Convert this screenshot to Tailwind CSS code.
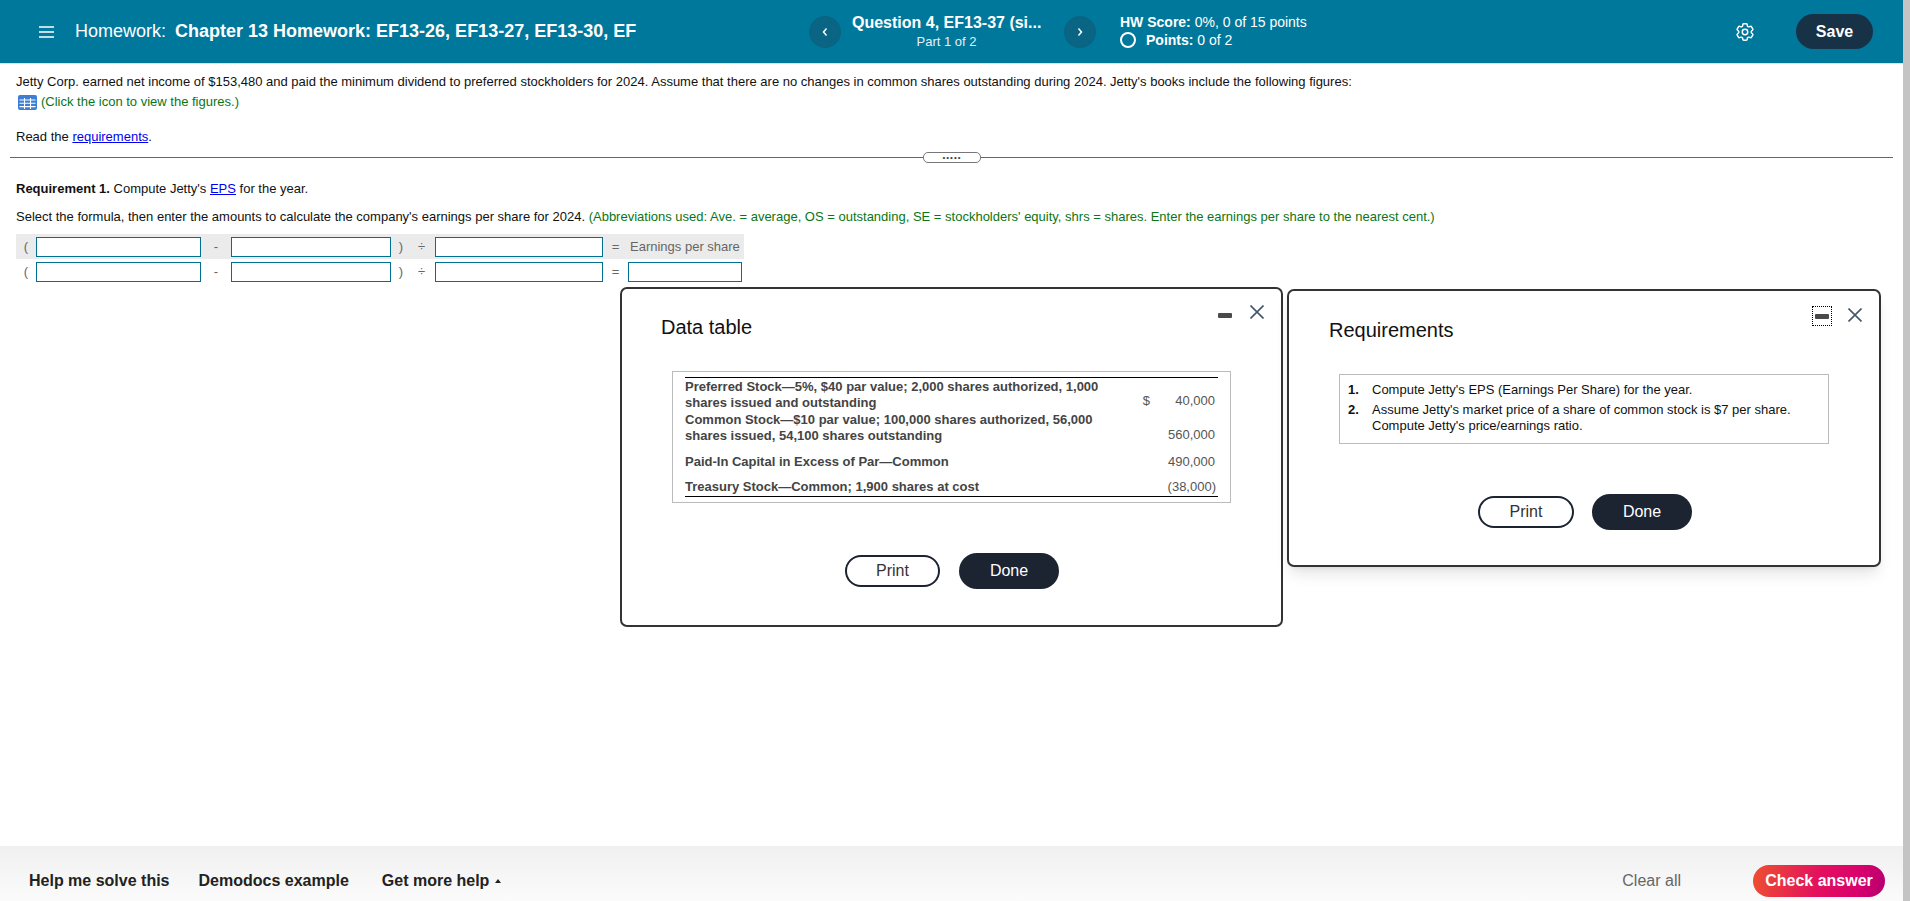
<!DOCTYPE html>
<html lang="en">
<head>
  <meta charset="UTF-8">
  <title>Homework: Chapter 13 Homework</title>
  <script src="https://cdn.jsdelivr.net/npm/@tailwindcss/browser@4"></script>
</head>
<body class="bg-white font-['Liberation_Sans',Arial,sans-serif] overflow-hidden">
<div class="flex h-[901px] w-[1910px]">
  <div class="relative flex flex-col w-[1903px] h-full">

    <!-- Header -->
    <header class="flex items-center h-[64px] shrink-0 bg-[#00789c] border-b border-[#cfe4ec] text-white pl-[39px] pr-[30px]">
      <svg class="w-[15px] h-[12px] shrink-0" viewBox="0 0 15 12" fill="none" stroke="currentColor" stroke-width="1.4"><path d="M0 1h15M0 6h15M0 11h15"/></svg>
      <div class="ml-[21px] w-[734px] shrink-0 text-[18px] whitespace-nowrap">Homework:<span class="ml-[9px] font-bold">Chapter 13 Homework: EF13-26, EF13-27, EF13-30, EF</span></div>
      <button class="flex items-center justify-center w-[32px] h-[32px] rounded-full bg-[#0a6483] shrink-0">
        <svg class="w-[8px] h-[10px]" viewBox="0 0 8 10" fill="none" stroke="currentColor" stroke-width="1.5"><path d="M5.5 1.5 2.5 5l3 3.5"/></svg>
      </button>
      <div class="w-[223px] shrink-0 pl-[11px] pr-[23px] text-center">
        <div class="text-[16px] font-bold whitespace-nowrap leading-[20px]">Question 4, EF13-37 (si...</div>
        <div class="text-[13px] leading-[16px] mt-[1px] text-[#e3f1f6]">Part 1 of 2</div>
      </div>
      <button class="flex items-center justify-center w-[32px] h-[32px] rounded-full bg-[#0a6483] shrink-0">
        <svg class="w-[8px] h-[10px]" viewBox="0 0 8 10" fill="none" stroke="currentColor" stroke-width="1.5"><path d="M2.5 1.5 5.5 5l-3 3.5"/></svg>
      </button>
      <div class="ml-[24px] -mt-[1px] text-[14px] leading-[18px]">
        <div><span class="font-bold">HW Score:</span> 0%, 0 of 15 points</div>
        <div class="flex items-center">
          <span class="w-[16px] h-[16px] rounded-full border-2 border-white mr-[10px]"></span>
          <span><span class="font-bold">Points:</span> 0 of 2</span>
        </div>
      </div>
      <svg class="ml-auto w-[22px] h-[22px]" viewBox="0 0 24 24" fill="none" stroke="currentColor" stroke-width="1.6" stroke-linejoin="round"><path d="M9.594 3.94c.09-.542.56-.94 1.11-.94h2.593c.55 0 1.02.398 1.11.94l.213 1.281c.063.374.313.686.645.87.074.04.147.083.22.127.325.196.72.257 1.075.124l1.217-.456a1.125 1.125 0 0 1 1.37.49l1.296 2.247a1.125 1.125 0 0 1-.26 1.431l-1.003.827c-.293.241-.438.613-.43.992a7.723 7.723 0 0 1 0 .255c-.008.378.137.75.43.991l1.004.827c.424.35.534.955.26 1.43l-1.298 2.247a1.125 1.125 0 0 1-1.369.491l-1.217-.456c-.355-.133-.75-.072-1.076.124a6.47 6.47 0 0 1-.22.128c-.331.183-.581.495-.644.869l-.213 1.281c-.09.543-.56.94-1.11.94h-2.594c-.55 0-1.019-.398-1.11-.94l-.213-1.281c-.062-.374-.312-.686-.644-.87a6.52 6.52 0 0 1-.22-.127c-.325-.196-.72-.257-1.076-.124l-1.217.456a1.125 1.125 0 0 1-1.369-.49l-1.297-2.247a1.125 1.125 0 0 1 .26-1.431l1.004-.827c.292-.24.437-.613.43-.991a6.932 6.932 0 0 1 0-.255c.007-.38-.138-.751-.43-.992l-1.004-.827a1.125 1.125 0 0 1-.26-1.43l1.297-2.247a1.125 1.125 0 0 1 1.37-.491l1.216.456c.356.133.751.072 1.076-.124.072-.044.146-.086.22-.128.332-.183.582-.495.644-.869l.214-1.28Z"/><circle cx="12" cy="12" r="3"/></svg>
      <button class="ml-[40px] w-[77px] h-[35px] rounded-full bg-[#173247] text-[16px] font-bold">Save</button>
    </header>

    <!-- Question -->
    <main class="flex-1 pt-[8px] text-[13px] leading-[20px] text-[#111]">
      <p class="px-[16px]">Jetty Corp. earned net income of $153,480 and paid the minimum dividend to preferred stockholders for 2024. Assume that there are no changes in common shares outstanding during 2024. Jetty's books include the following figures:</p>
      <p class="flex items-center px-[18px] text-[#0a7518]">
        <svg class="w-[19px] h-[15px] mr-[4px]" viewBox="0 0 19 15"><rect width="19" height="15" rx="2" fill="#3a7fd5"/><path d="M1.5 5h16M1.5 8.300h16M1.5 11.600h16M6.500 3v11M12.500 3v11" stroke="#fff" stroke-width="1.100"/></svg>
        (Click the icon to view the figures.)
      </p>
      <p class="px-[16px] mt-[15px]">Read the <a href="#" class="text-[#0000ee] underline">requirements</a>.</p>

      <div class="relative mx-[10px] mt-[10px] border-t border-[#666]">
        <div class="absolute left-[913px] top-[-6px] flex items-center justify-center w-[58px] h-[11px] bg-white border border-[#777] rounded-[5px] text-[8px] leading-[6px] tracking-[1px] text-[#444]">•••••</div>
      </div>

      <p class="px-[16px] mt-[21px]"><span class="font-bold">Requirement 1.</span> Compute Jetty's <a href="#" class="text-[#0000ee] underline">EPS</a> for the year.</p>
      <p class="px-[16px] mt-[8px]">Select the formula, then enter the amounts to calculate the company's earnings per share for 2024. <span class="text-[#0a7518]">(Abbreviations used: Ave. = average, OS = outstanding, SE = stockholders' equity, shrs = shares. Enter the earnings per share to the nearest cent.)</span></p>

      <!-- Formula -->
      <div class="ml-[16px] mt-[7px] w-[728px] text-[#666]">
        <div class="flex items-center h-[25px] bg-[#ebebeb]">
          <span class="w-[20px] text-center">(</span>
          <input class="w-[165px] h-[20px] bg-white border border-[#006f90]">
          <span class="w-[30px] text-center">-</span>
          <input class="w-[160px] h-[20px] bg-white border border-[#006f90]">
          <span class="w-[20px] text-center">)</span>
          <span class="w-[24px] pr-[3px] text-center">÷</span>
          <input class="w-[168px] h-[20px] bg-white border border-[#006f90]">
          <span class="w-[25px] text-center">=</span>
          <span class="pl-[2px] whitespace-nowrap">Earnings per share</span>
        </div>
        <div class="flex items-center h-[26px]">
          <span class="w-[20px] text-center">(</span>
          <input class="w-[165px] h-[20px] bg-white border border-[#006f90]">
          <span class="w-[30px] text-center">-</span>
          <input class="w-[160px] h-[20px] bg-white border border-[#006f90]">
          <span class="w-[20px] text-center">)</span>
          <span class="w-[24px] pr-[3px] text-center">÷</span>
          <input class="w-[168px] h-[20px] bg-white border border-[#006f90]">
          <span class="w-[25px] text-center">=</span>
          <input class="w-[114px] h-[20px] bg-white border border-[#006f90]">
        </div>
      </div>
    </main>

    <!-- Footer -->
    <footer class="flex items-center h-[55px] shrink-0 pt-[14px] pl-[29px] pr-[18px] bg-gradient-to-b from-[#f0f0f0] to-[#fbfbfb] text-[16px]">
      <span class="font-bold text-[#222]">Help me solve this</span>
      <span class="ml-[29px] font-bold text-[#222]">Demodocs example</span>
      <span class="ml-[33px] font-bold text-[#222]">Get more help</span>
      <span class="ml-[6px] w-0 h-0 border-x-[3.5px] border-x-transparent border-b-[4px] border-b-[#222]"></span>
      <span class="ml-auto text-[#666]">Clear all</span>
      <button class="ml-[72px] w-[132px] h-[32px] rounded-full bg-[linear-gradient(100deg,#ee5030,#e3105e_50%,#d8006e_80%,#b3006f)] text-white font-bold">Check answer</button>
    </footer>

    <!-- Data table window -->
    <section class="absolute left-[620px] top-[287px] w-[663px] h-[340px] bg-white border-2 border-[#333] rounded-[7px]">
      <div class="absolute left-[596px] top-[24px] w-[14px] h-[5px] bg-[#4a4a4a] rounded-[1px]"></div>
      <svg class="absolute left-[628px] top-[16px] w-[14px] h-[14px]" viewBox="0 0 14 14" fill="none" stroke="#46566a" stroke-width="1.600"><path d="M.5.5l13 13M13.500.5l-13 13"/></svg>
      <h2 class="ml-[39px] mt-[25px] text-[20px] leading-[26px] text-[#111]">Data table</h2>
      <div class="ml-[50px] mt-[31px] w-[559px] h-[132px] border border-[#bbb] px-[12px] pt-[5px]">
        <table class="table-fixed w-[533px] border-y border-black text-[13px] leading-[16px] text-[#444]">
          <tbody>
            <tr class="h-[33px]">
              <td class="w-[430px] pt-[1px] font-bold">Preferred Stock—5%, $40 par value; 2,000 shares authorized, 1,000 shares issued and outstanding</td>
              <td class="w-[35px] align-bottom pb-[2px] text-right text-[#555]">$</td>
              <td class="w-[68px] align-bottom pb-[2px] pr-[3px] text-right text-[#555]">40,000</td>
            </tr>
            <tr class="h-[34px]">
              <td class="font-bold">Common Stock—$10 par value; 100,000 shares authorized, 56,000 shares issued, 54,100 shares outstanding</td>
              <td></td>
              <td class="align-bottom pb-[2px] pr-[3px] text-right text-[#555]">560,000</td>
            </tr>
            <tr class="h-[31px]">
              <td class="pt-[2px] font-bold">Paid-In Capital in Excess of Par—Common</td>
              <td></td>
              <td class="pt-[2px] pr-[3px] text-right text-[#555]">490,000</td>
            </tr>
            <tr class="h-[20px]">
              <td class="pt-[2px] font-bold">Treasury Stock—Common; 1,900 shares at cost</td>
              <td></td>
              <td class="pt-[2px] pr-[2px] text-right text-[#555]">(38,000)</td>
            </tr>
          </tbody>
        </table>
      </div>
      <div class="flex items-center mt-[50px] ml-[223px] gap-[19px]">
        <button class="w-[95px] h-[32px] rounded-full border-2 border-[#1c2331] text-[16px] text-[#333]">Print</button>
        <button class="w-[100px] h-[36px] rounded-full bg-[#1c2331] text-[16px] text-white">Done</button>
      </div>
    </section>

    <!-- Requirements window -->
    <section class="absolute left-[1287px] top-[289px] w-[594px] h-[278px] bg-white border-2 border-[#333] rounded-[7px] shadow-lg">
      <div class="absolute left-[523px] top-[15px] flex items-center justify-center w-[20px] h-[20px] border border-dotted border-black">
        <div class="w-[14px] h-[5px] bg-[#4a4a4a] rounded-[1px]"></div>
      </div>
      <svg class="absolute left-[559px] top-[17px] w-[14px] h-[14px]" viewBox="0 0 14 14" fill="none" stroke="#46566a" stroke-width="1.600"><path d="M.5.5l13 13M13.500.5l-13 13"/></svg>
      <h2 class="ml-[40px] mt-[26px] text-[20px] leading-[26px] text-[#111]">Requirements</h2>
      <ol class="ml-[50px] mt-[31px] w-[490px] h-[70px] border border-[#bbb] pl-[8px] pt-[7px] text-[13px] leading-[16px] text-[#111]">
        <li class="flex"><span class="w-[24px] font-bold">1.</span><span>Compute Jetty's EPS (Earnings Per Share) for the year.</span></li>
        <li class="flex mt-[4px]"><span class="w-[24px] shrink-0 font-bold">2.</span><span>Assume Jetty's market price of a share of common stock is $7 per share.<br>Compute Jetty's price/earnings ratio.</span></li>
      </ol>
      <div class="flex items-center mt-[50px] ml-[189px] gap-[18px]">
        <button class="w-[96px] h-[32px] rounded-full border-2 border-[#1c2331] text-[16px] text-[#333]">Print</button>
        <button class="w-[100px] h-[36px] rounded-full bg-[#1c2331] text-[16px] text-white">Done</button>
      </div>
    </section>
  </div>

  <!-- Scrollbar -->
  <div class="w-[7px] h-full bg-[#c4c4c4]"></div>
</div>
</body>
</html>
